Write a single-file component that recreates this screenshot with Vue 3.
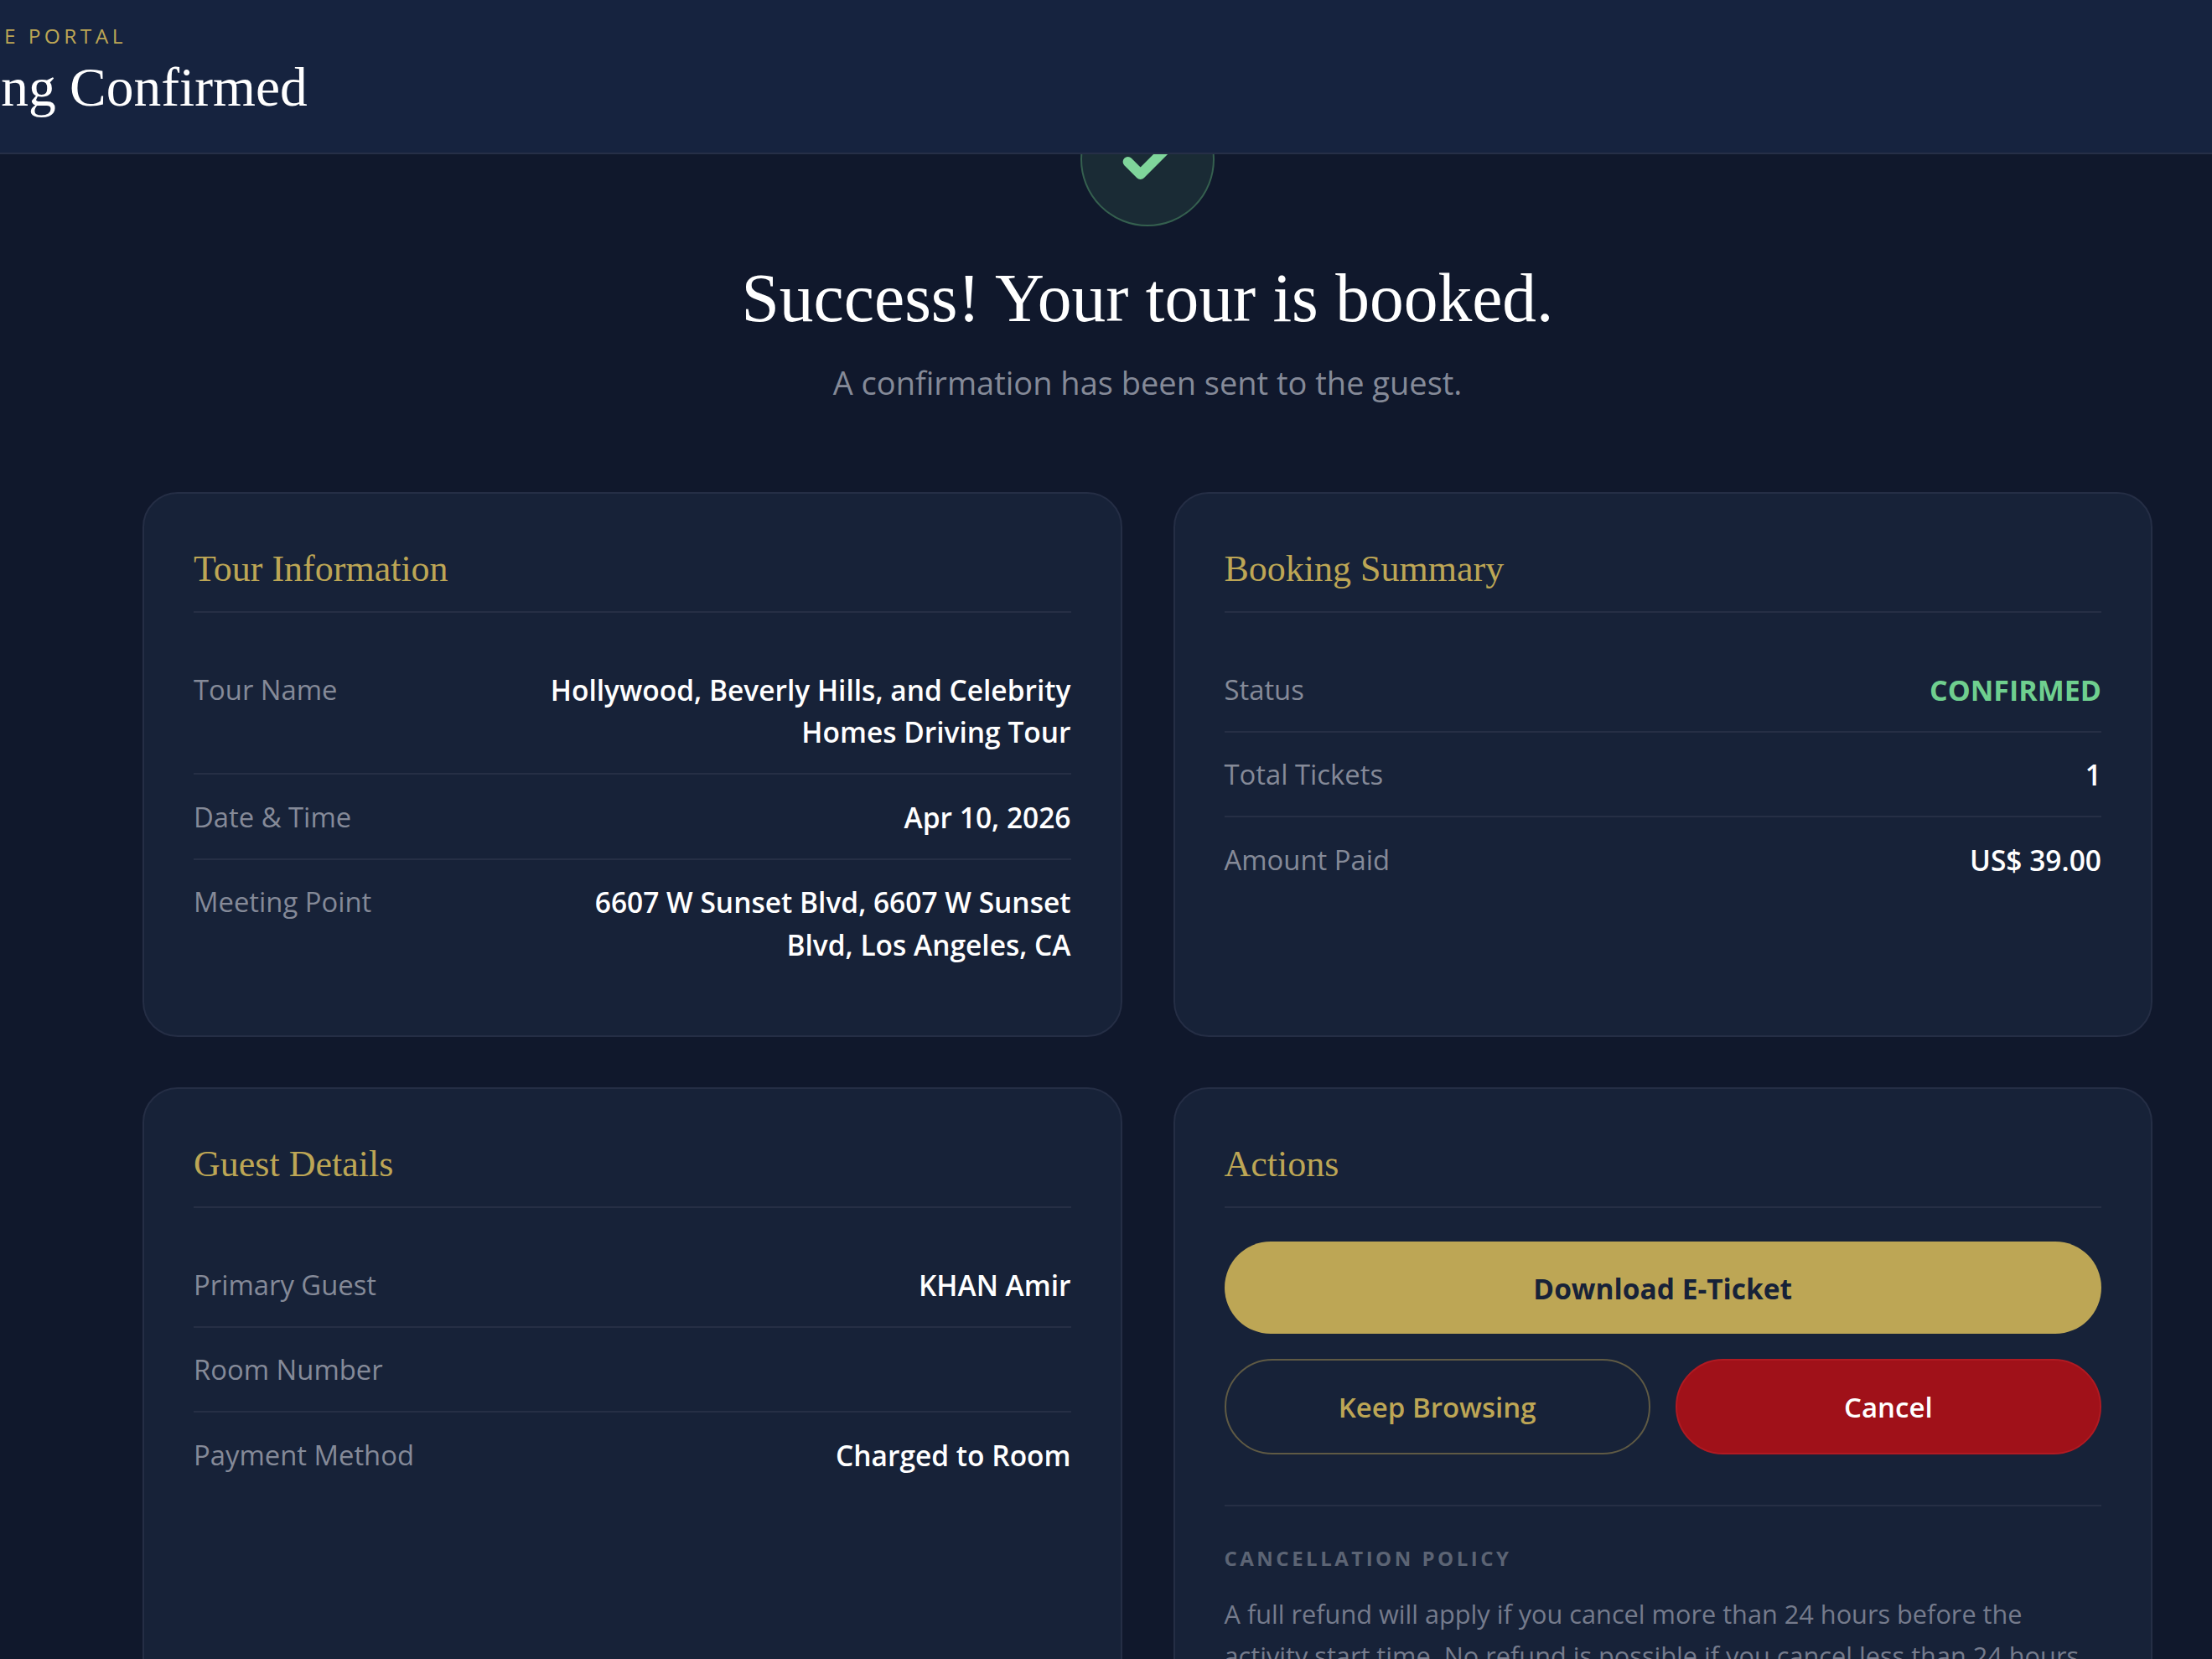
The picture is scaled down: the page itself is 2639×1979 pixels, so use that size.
<template>
  <div class="page">
    <header class="topbar">
      <div class="topbar-text">
        <p class="eyebrow">CONCIERGE PORTAL</p>
        <h1 class="topbar-title">Booking Confirmed</h1>
      </div>
    </header>

    <main class="content">
      <section class="hero">
        <div class="success-icon">
          <svg viewBox="0 0 24 24" width="72" height="72" fill="none" stroke="#7fd69b" stroke-width="4" stroke-linecap="round" stroke-linejoin="round">
            <polyline points="20.2 7 9.2 18 4.2 13" />
          </svg>
        </div>
        <h2 class="hero-title">Success! Your tour is booked.</h2>
        <p class="hero-sub">A confirmation has been sent to the guest.</p>
      </section>

      <div class="grid">
        <section v-for="card in cards" :key="card.title" class="card">
          <h3 class="card-title">{{ card.title }}</h3>
          <div v-for="row in card.rows" :key="row.label" class="row">
            <span class="row-label">{{ row.label }}</span>
            <span class="row-value" :class="{ confirmed: row.value === 'CONFIRMED' }">{{ row.value }}</span>
          </div>
        </section>

        <section class="card">
          <h3 class="card-title actions-title">Actions</h3>
          <button class="btn btn-primary">Download E-Ticket</button>
          <div class="btn-pair">
            <button class="btn btn-outline">Keep Browsing</button>
            <button class="btn btn-danger">Cancel</button>
          </div>
          <div class="policy">
            <h4>CANCELLATION POLICY</h4>
            <p>A full refund will apply if you cancel more than 24 hours before the activity start time. No refund is possible if you cancel less than 24 hours before the activity start time.</p>
          </div>
        </section>
      </div>
    </main>
  </div>
</template>

<script setup>
const cards = [
  {
    title: 'Tour Information',
    rows: [
      { label: 'Tour Name', value: 'Hollywood, Beverly Hills, and Celebrity Homes Driving Tour' },
      { label: 'Date & Time', value: 'Apr 10, 2026' },
      { label: 'Meeting Point', value: '6607 W Sunset Blvd, 6607 W Sunset Blvd, Los Angeles, CA' },
    ],
  },
  {
    title: 'Booking Summary',
    rows: [
      { label: 'Status', value: 'CONFIRMED' },
      { label: 'Total Tickets', value: '1' },
      { label: 'Amount Paid', value: 'US$ 39.00' },
    ],
  },
  {
    title: 'Guest Details',
    rows: [
      { label: 'Primary Guest', value: 'KHAN Amir' },
      { label: 'Room Number', value: '' },
      { label: 'Payment Method', value: 'Charged to Room' },
    ],
  },
]
</script>

<style>
html,
body {
  margin: 0;
  background: #10182c;
}
</style>

<style scoped>
.page {
  height: 1979px;
  overflow: hidden;
  background: #10182c;
  font-family: "Open Sans", "Noto Sans", sans-serif;
  font-size: 32.8px;
  line-height: 50.4px;
  color: #fff;
}

.topbar {
  position: relative;
  z-index: 2;
  height: 182px;
  background: #16233f;
  border-bottom: 2px solid #262f47;
}

.topbar-text {
  margin-left: -159px;
  padding-top: 24px;
}

.eyebrow {
  margin: 0 0 0 7px;
  font-size: 24.5px;
  font-weight: 500;
  line-height: 38px;
  letter-spacing: 4.4px;
  color: #bda655;
}

.topbar-title {
  margin: 6px 0 0;
  font-family: "Liberation Serif", serif;
  font-weight: 400;
  font-size: 65.5px;
  line-height: 72px;
}

.content {
  margin-top: -74px;
  padding: 0 71px 0 170px;
}

.hero {
  display: flex;
  flex-direction: column;
  align-items: center;
}

.success-icon {
  width: 160px;
  height: 160px;
  box-sizing: border-box;
  border-radius: 50%;
  display: flex;
  align-items: center;
  justify-content: center;
  background: #1a2b35;
  border: 2px solid #35604f;
}

.hero-title {
  margin: 38px 0 0;
  font-family: "Liberation Serif", serif;
  font-weight: 400;
  font-size: 81.5px;
  line-height: 96px;
}

.hero-sub {
  margin: 27px 0 0;
  color: #858a98;
  font-size: 38px;
}

.grid {
  display: grid;
  grid-template-columns: 1168.5px 1168.5px;
  gap: 60px 61px;
  margin-top: 105.6px;
}

.card {
  box-sizing: border-box;
  padding: 59px;
  min-height: 650px;
  background: #172238;
  border: 2px solid #252e45;
  border-radius: 42px;
}

.card-title {
  margin: 0 0 41.5px;
  padding: 4px 0 23px;
  border-bottom: 2px solid #262f45;
  font-family: "Liberation Serif", serif;
  font-weight: 400;
  font-size: 44px;
  line-height: 54px;
  color: #bda655;
}

.actions-title {
  margin-bottom: 40px;
}

.row {
  display: flex;
  justify-content: space-between;
  align-items: flex-start;
  gap: 40px;
  padding: 25.5px 0 23.5px;
  border-bottom: 2px solid #262f45;
}

.row:last-child {
  border-bottom: none;
}

.row-label {
  color: #858a98;
  white-space: nowrap;
}

.row-value {
  max-width: 640px;
  text-align: right;
  font-size: 33.5px;
  font-weight: 600;
}

.confirmed {
  color: #6fcf8f;
  font-size: 34px;
  font-weight: 700;
}

.btn {
  display: block;
  box-sizing: border-box;
  width: 100%;
  padding-top: 2px;
  border-radius: 60px;
  font-family: inherit;
  font-size: 33px;
  font-weight: 600;
  cursor: pointer;
}

.btn-primary {
  height: 110px;
  border: none;
  background: #bda655;
  color: #172238;
  font-size: 33.5px;
  font-weight: 700;
}

.btn-pair {
  display: grid;
  grid-template-columns: 1fr 1fr;
  gap: 30px;
  margin-top: 30px;
}

.btn-outline {
  height: 114px;
  background: transparent;
  border: 2px solid #5f5a44;
  color: #bda655;
}

.btn-danger {
  height: 114px;
  background: #a01119;
  border: 2px solid #b01a22;
  color: #fff;
}

.policy {
  margin-top: 60px;
  padding-top: 42px;
  border-top: 2px solid #262f45;
}

.policy h4 {
  margin: 0;
  font-size: 24px;
  font-weight: 700;
  letter-spacing: 3.5px;
  line-height: 40px;
  color: #5c6474;
}

.policy p {
  margin: 21px 0 0;
  color: #757b8c;
  font-size: 30.7px;
}
</style>
